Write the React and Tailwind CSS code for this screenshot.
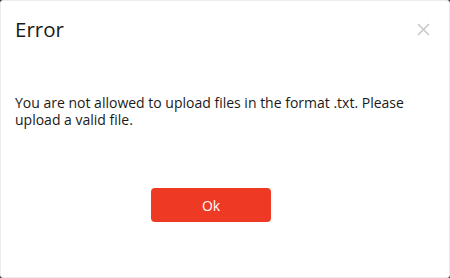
import React from 'react';

export default function App() {
  return (
    <div className="w-[450px] h-[278px] bg-[#3a3a3a]" style={{ fontFamily: '"Open Sans", sans-serif' }}>
      <div className="w-full h-full bg-white rounded-[3px] border border-[#ececec] flex flex-col">
        <div className="flex items-center justify-between pl-[14px] pr-[19px] pt-[14px]">
          <h2 className="text-[20.5px] leading-[28px] text-[#1a1a1a]">Error</h2>
          <button className="text-[#c9c9c9]" aria-label="Close">
            <svg width="13" height="13" viewBox="0 0 13 13" fill="none" stroke="currentColor" strokeWidth="1.6">
              <path d="M1 1L12 12M12 1L1 12" />
            </svg>
          </button>
        </div>

        <p className="mt-[51px] px-[14px] text-[14px] leading-[17px] text-[#1a1a1a]">
          You are not allowed to upload files in the format .txt. Please upload a valid file.
        </p>

        <div className="mt-[60px] flex justify-center pr-[28px]">
          <button className="w-[120px] h-[34px] rounded-[4px] bg-[#ee3a24] text-white text-[14px]">
            Ok
          </button>
        </div>
      </div>
    </div>
  );
}
